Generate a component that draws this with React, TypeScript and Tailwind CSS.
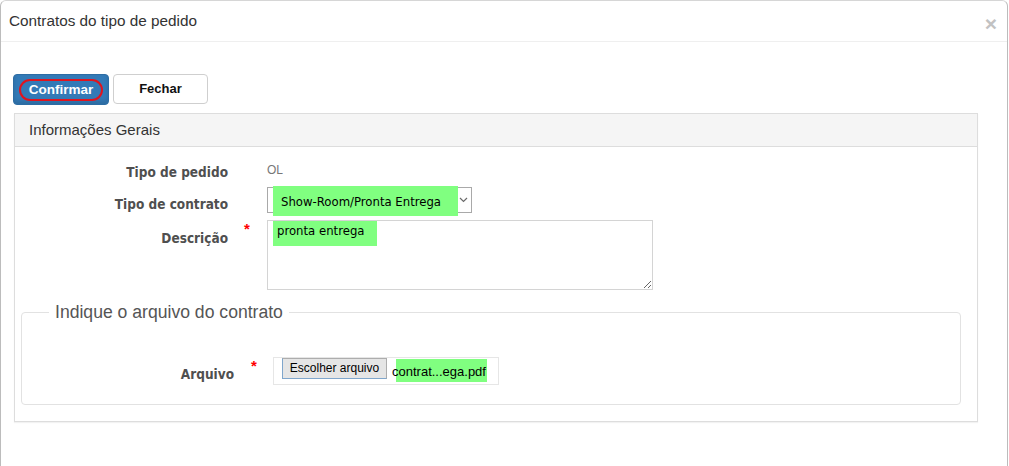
import React from "react";

const sans = "font-['Liberation_Sans',Arial,sans-serif]";
const tah = "font-['DejaVu_Sans_Condensed','DejaVu_Sans',sans-serif]";

function Label({ text, pt = "pt-[9px]" }: { text: string; pt?: string }) {
  return (
    <div className={`w-[213px] shrink-0 text-right ${pt} ${tah} text-[13.5px] font-bold leading-[16px] text-[#4f4f4f]`}>
      {text}
    </div>
  );
}

function Star({ pl, pt }: { pl: string; pt: string }) {
  return (
    <div className={`w-[39px] shrink-0 ${pl} ${pt} ${sans} text-[15px] font-bold leading-[12px] text-[#f00]`}>*</div>
  );
}

export default function App() {
  return (
    <div className="h-[466px] w-[1009px] overflow-hidden bg-white">
      <div className="h-[480px] w-[1008px] rounded-t-[6px] border border-[#bcbcbc] border-t-[#d6d6d6] bg-white">
        {/* header */}
        <div className="flex h-[41px] items-center justify-between border-b border-[#efefef] pl-[8px] pr-[10px]">
          <span className={`${sans} pt-[1px] text-[15.3px] text-[#333]`}>Contratos do tipo de pedido</span>
          <span className={`${sans} pt-[5px] text-[21px] font-bold leading-none text-[#c2c2c2]`}>×</span>
        </div>

        <div className="pl-[12px] pt-[32px]">
          {/* buttons */}
          <div className="flex gap-[4px]">
            <button className={`flex h-[31px] w-[96px] items-center justify-center rounded-[4px] border border-[#2e6da4] bg-[#337ab7] shadow-[inset_0_-3px_4px_rgba(0,0,0,0.12)] ${sans}`}>
              <span className="rounded-full border-2 border-[#e0141e] px-[8px] text-[13.5px] font-bold leading-[18px] text-white">
                Confirmar
              </span>
            </button>
            <button className={`h-[30px] w-[95px] rounded-[4px] border border-[#cfcfcf] bg-white ${sans} text-[13px] font-bold text-[#111]`}>
              Fechar
            </button>
          </div>

          {/* panel */}
          <div className="ml-[1px] mt-[8px] w-[964px] border border-[#dddddd] shadow-[0_1px_1px_rgba(0,0,0,0.05)]">
            <div className={`flex h-[33px] items-center border-b border-[#dddddd] bg-[#f5f5f5] pl-[14px] ${sans} text-[15px] text-[#333]`}>
              Informações Gerais
            </div>

            <div className="pb-[16px] pt-[13px]">
              {/* Tipo de pedido */}
              <div className="flex h-[24px]">
                <Label text="Tipo de pedido" pt="pt-[4px]" />
                <div className="w-[39px] shrink-0" />
                <div className={`${sans} pt-[2px] text-[12px] leading-[16px] text-[#777]`}>OL</div>
              </div>

              {/* Tipo de contrato */}
              <div className="mt-[3px] flex">
                <Label text="Tipo de contrato" />
                <div className="w-[39px] shrink-0" />
                <div className="relative h-[26px] w-[205px] border border-[#a9a9a9] bg-white">
                  <div className="absolute left-[5px] top-[-2px] h-[30px] w-[185px] bg-[#80ff80]" />
                  <span className={`relative ml-[13px] ${tah} text-[13px] leading-[24px] text-black`}>
                    Show-Room/Pronta Entrega
                  </span>
                  <svg className="absolute right-[3px] top-[9px]" width="9" height="6" viewBox="0 0 9 6">
                    <path d="M1 1 L4.5 4.5 L8 1" fill="none" stroke="#6b6b6b" strokeWidth="1.2" />
                  </svg>
                </div>
              </div>

              {/* Descrição */}
              <div className="mt-[7px] flex">
                <Label text="Descrição" pt="pt-[10px]" />
                <Star pl="pl-[16px]" pt="pt-[3px]" />
                <div className="relative h-[70px] w-[386px] bg-white">
                  <div className="absolute left-[6px] top-0 h-[26px] w-[104px] bg-[#80ff80]" />
                  <textarea
                    readOnly
                    value="pronta entrega"
                    className={`relative block h-[70px] w-[386px] resize border border-[#d4d4d4] bg-transparent px-[9px] pt-[1px] ${tah} text-[13px] leading-[18px] text-black outline-none`}
                  />
                </div>
              </div>

              {/* fieldset */}
              <fieldset className="ml-[6px] mt-[12px] w-[940px] rounded-[4px] border border-[#e2e2e2] pb-[19px]">
                <legend className={`ml-[27px] px-[6px] ${sans} text-[17.6px] leading-[20px] text-[#555]`}>
                  Indique o arquivo do contrato
                </legend>
                <div className="mt-[35px] flex">
                  <div className={`w-[212px] shrink-0 pt-[9px] text-right ${tah} text-[13.5px] font-bold leading-[16px] text-[#4f4f4f]`}>
                    Arquivo
                  </div>
                  <Star pl="pl-[17px]" pt="pt-[3px]" />
                  <div className="flex h-[28px] w-[226px] items-start border border-[#e6e6e6] bg-white pl-[8px]">
                    <div className={`h-[21px] w-[105px] border border-[#adadad] border-b-[#7fa6cc] border-l-[#7fa6cc] bg-[#e5e5e5] text-center ${sans} text-[12px] leading-[19px] text-black`}>
                      Escolher arquivo
                    </div>
                    <div className="relative ml-[5px] h-[24px]">
                      <div className="absolute left-[4px] top-[1px] h-[23px] w-[91px] bg-[#80ff80]" />
                      <span className={`relative ${sans} text-[13px] leading-[22px] text-black`}>contrat...ega.pdf</span>
                    </div>
                  </div>
                </div>
              </fieldset>
            </div>
          </div>
        </div>
      </div>
    </div>
  );
}
